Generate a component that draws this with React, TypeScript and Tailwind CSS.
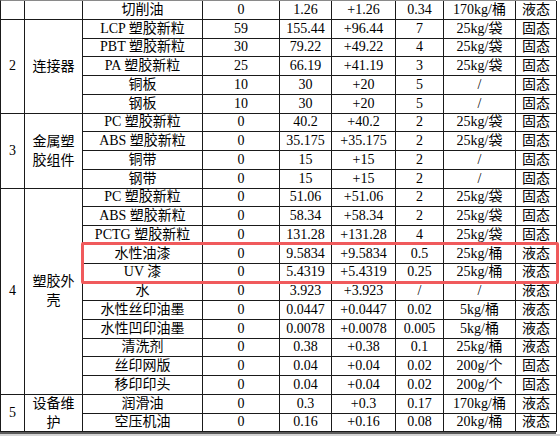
type Row = [string, string, string, string, string, string, string];
type Group = { no: string; name: string; rows: Row[] };

// Material consumption table, one group per production line.
const groups: Group[] = [
  {
    no: "",
    name: "",
    rows: [["切削油", "0", "1.26", "+1.26", "0.34", "170kg/桶", "液态"]],
  },
  {
    no: "2",
    name: "连接器",
    rows: [
      ["LCP 塑胶新粒", "59", "155.44", "+96.44", "7", "25kg/袋", "固态"],
      ["PBT 塑胶新粒", "30", "79.22", "+49.22", "4", "25kg/袋", "固态"],
      ["PA 塑胶新粒", "25", "66.19", "+41.19", "3", "25kg/袋", "固态"],
      ["铜板", "10", "30", "+20", "5", "/", "固态"],
      ["钢板", "10", "30", "+20", "5", "/", "固态"],
    ],
  },
  {
    no: "3",
    name: "金属塑胶组件",
    rows: [
      ["PC 塑胶新粒", "0", "40.2", "+40.2", "2", "25kg/袋", "固态"],
      ["ABS 塑胶新粒", "0", "35.175", "+35.175", "2", "25kg/袋", "固态"],
      ["铜带", "0", "15", "+15", "2", "/", "固态"],
      ["钢带", "0", "15", "+15", "2", "/", "固态"],
    ],
  },
  {
    no: "4",
    name: "塑胶外壳",
    rows: [
      ["PC 塑胶新粒", "0", "51.06", "+51.06", "2", "25kg/袋", "固态"],
      ["ABS 塑胶新粒", "0", "58.34", "+58.34", "2", "25kg/袋", "固态"],
      ["PCTG 塑胶新粒", "0", "131.28", "+131.28", "4", "25kg/袋", "固态"],
      ["水性油漆", "0", "9.5834", "+9.5834", "0.5", "25kg/桶", "液态"],
      ["UV 漆", "0", "5.4319", "+5.4319", "0.25", "25kg/桶", "液态"],
      ["水", "0", "3.923", "+3.923", "/", "/", "液态"],
      ["水性丝印油墨", "0", "0.0447", "+0.0447", "0.02", "5kg/桶", "液态"],
      ["水性凹印油墨", "0", "0.0078", "+0.0078", "0.005", "5kg/桶", "液态"],
      ["清洗剂", "0", "0.38", "+0.38", "0.1", "25kg/桶", "液态"],
      ["丝印网版", "0", "0.04", "+0.04", "0.02", "200g/个", "固态"],
      ["移印印头", "0", "0.04", "+0.04", "0.02", "200g/个", "固态"],
    ],
  },
  {
    no: "5",
    name: "设备维护",
    rows: [
      ["润滑油", "0", "0.3", "+0.3", "0.17", "170kg/桶", "液态"],
      ["空压机油", "0", "0.16", "+0.16", "0.08", "20kg/桶", "液态"],
    ],
  },
];

const span: Record<number, string> = {
  1: "row-span-1",
  2: "row-span-2",
  4: "row-span-4",
  5: "row-span-5",
  11: "row-span-11",
};

const box = "flex items-center justify-center border-r border-b border-[#1a1a1a]";
const cell = `${box} whitespace-nowrap`;

export default function App() {
  return (
    <div className="relative h-[436px] w-[560px] overflow-hidden bg-white font-['Liberation_Serif','Noto_Sans_CJK_SC',serif] text-[14px] leading-none text-black">
      <div className="grid w-[556px] grid-cols-[24px_58px_120px_77px_52px_64px_48px_72px_41px] auto-rows-[18.75px] border-t border-l border-t-[#8a8a8a] border-l-[#1a1a1a]">
        {groups.map((g) => (
          <Rows key={g.no + g.rows[0][0]} group={g} />
        ))}
      </div>
      <div className="h-[2px] w-[556px] bg-[#5a5a5a]" />
      <div className="h-[4px] w-full bg-[#d4d4d4]" />

      {/* highlight over the two paint rows */}
      <div className="pointer-events-none absolute top-[242px] left-[81px] h-[42px] w-[478px] rounded-[2px] border-[3px] border-[#f05a5c]" />
    </div>
  );
}

function Rows({ group }: { group: Group }) {
  const n = group.rows.length;
  return (
    <>
      {group.rows.map((r, i) => (
        <RowCells key={i} row={r} lead={i === 0 ? group : null} span={n} />
      ))}
    </>
  );
}

function RowCells({ row, lead, span: n }: { row: Row; lead: Group | null; span: number }) {
  return (
    <>
      {lead && (
        <>
          <div className={`${cell} ${span[n]}`}>{lead.no}</div>
          <div className={`${box} ${span[n]} px-[7px]`}>
            <span className="block w-[42px] text-center leading-[19px] break-all">{lead.name}</span>
          </div>
        </>
      )}
      {row.map((v, j) => (
        <div key={j} className={cell}>
          {v}
        </div>
      ))}
    </>
  );
}
